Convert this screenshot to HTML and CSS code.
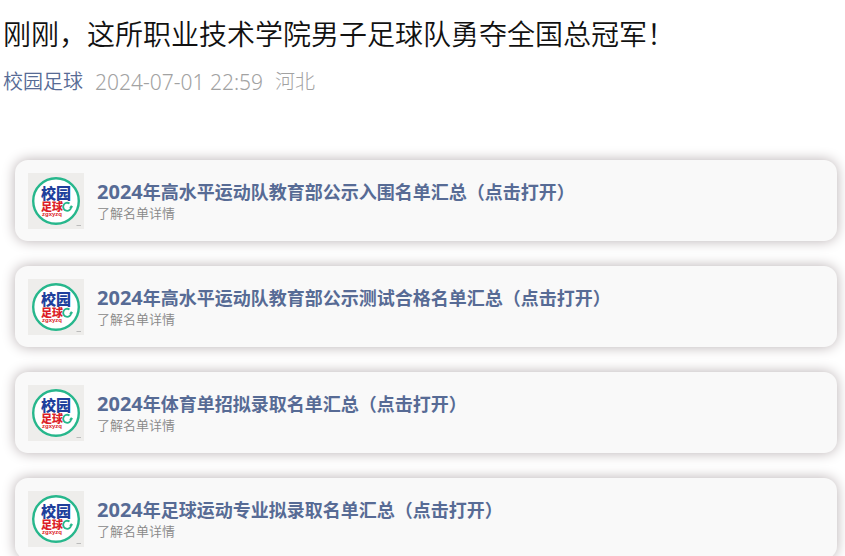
FILE: index.html
```html
<!DOCTYPE html>
<html lang="zh-CN">
<head>
<meta charset="utf-8">
<meta name="viewport" content="width=device-width, initial-scale=1">
<title>刚刚，这所职业技术学院男子足球队勇夺全国总冠军！</title>
<link rel="stylesheet" href="styles.css">
</head>
<body>
<svg class="defs" aria-hidden="true">
  <symbol id="logo" viewBox="0 0 56 56">
    <rect width="56" height="56" fill="#eeedeb"/>
    <circle cx="28" cy="28" r="22.8" fill="#fff" stroke="#27b78c" stroke-width="2.4"/>
    <text class="logo-top" x="13" y="26">校园</text>
    <text class="logo-bottom" x="13" y="38">足球</text>
    <text class="logo-latin" x="14" y="43">zgxyzq</text>
    <path d="M41.500 30.500a4 4 0 1 0 1.700 3.500M42 35l1.200-1.500 1.300.8" fill="none" stroke="#27b78c" stroke-width="1.800"/>
    <path d="M48.500 52.500h4.500" stroke="#bbb" stroke-width="1"/>
  </symbol>
</svg>
<main class="article">
  <h1 class="title">刚刚，这所职业技术学院男子足球队勇夺全国总冠军！</h1>
  <div class="meta">
    <a class="account" href="#">校园足球</a>
    <time class="date" datetime="2024-07-01T22:59">2024-07-01 22:59</time>
    <span class="place">河北</span>
  </div>
  <nav class="cards">
    <a class="card" href="#">
      <svg class="logo" aria-hidden="true"><use href="#logo"/></svg>
      <span class="card-text">
        <strong class="card-title"><span class="year">2024</span>年高水平运动队教育部公示入围名单汇总（点击打开）</strong>
        <span class="card-note">了解名单详情</span>
      </span>
    </a>
    <a class="card" href="#">
      <svg class="logo" aria-hidden="true"><use href="#logo"/></svg>
      <span class="card-text">
        <strong class="card-title"><span class="year">2024</span>年高水平运动队教育部公示测试合格名单汇总（点击打开）</strong>
        <span class="card-note">了解名单详情</span>
      </span>
    </a>
    <a class="card" href="#">
      <svg class="logo" aria-hidden="true"><use href="#logo"/></svg>
      <span class="card-text">
        <strong class="card-title"><span class="year">2024</span>年体育单招拟录取名单汇总（点击打开）</strong>
        <span class="card-note">了解名单详情</span>
      </span>
    </a>
    <a class="card" href="#">
      <svg class="logo" aria-hidden="true"><use href="#logo"/></svg>
      <span class="card-text">
        <strong class="card-title"><span class="year">2024</span>年足球运动专业拟录取名单汇总（点击打开）</strong>
        <span class="card-note">了解名单详情</span>
      </span>
    </a>
  </nav>
</main>
</body>
</html>
```
FILE: styles.css
```css
* {
  box-sizing: border-box;
}

html {
  overflow: hidden auto;
  scrollbar-width: none;
}

body {
  margin: 0;
  background: #fff;
  font-family: "Noto Sans", "Noto Sans CJK SC", sans-serif;
}

a {
  text-decoration: none;
}

.defs {
  display: none;
}

.article {
  padding: 14px 8px 24px 3px;
}

.title {
  margin: 0;
  font-size: 28px;
  line-height: 40px;
  font-weight: 350;
  color: #111;
}

.meta {
  display: flex;
  align-items: center;
  gap: 12px;
  margin-top: 14px;
  font-size: 20px;
  line-height: 28px;
  font-weight: 300;
  color: #a2a2a2;
}

.account {
  color: #576b95;
  font-weight: 350;
}

.date {
  font-size: 21px;
}

.cards {
  display: grid;
  gap: 25px;
  margin: 64px 0 0 12px;
}

.card {
  display: flex;
  gap: 13px;
  padding: 13px 13px 12px;
  border-radius: 13px;
  background: #f9f9f9;
  box-shadow: 0 0 13px #b8b0b2;
}

.logo {
  flex: none;
  width: 56px;
  height: 56px;
}

.card-text {
  display: flex;
  flex-direction: column;
  padding-top: 7px;
}

.card-title {
  font-size: 18px;
  line-height: 24px;
  font-weight: 700;
  color: #576b95;
}

.year {
  font-size: 20px;
}

.card-note {
  font-size: 13px;
  line-height: 18px;
  font-weight: 350;
  color: #888;
}

.logo-top,
.logo-bottom {
  font-family: "Noto Sans CJK SC", sans-serif;
  font-weight: 900;
}

.logo-top {
  font-size: 15px;
  fill: #203f9c;
}

.logo-bottom {
  font-size: 11px;
  fill: #dc1e28;
}

.logo-latin {
  font-family: "Liberation Sans", sans-serif;
  font-size: 6px;
  font-weight: 700;
  fill: #dc1e28;
}
```
